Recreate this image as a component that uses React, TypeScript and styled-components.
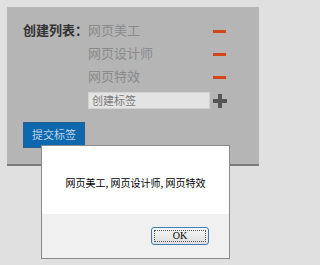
import React from "react";
import styled, { createGlobalStyle } from "styled-components";

const Global = createGlobalStyle`
  html, body { margin: 0; padding: 0; background: #e0e0e0; }
  body { font-family: "Noto Sans CJK SC", "Noto Sans", sans-serif; }
`;

const Page = styled.div`
  position: relative;
  width: 268px;
  height: 265px;
  padding: 7px 0 0 7px;
  box-sizing: border-box;
`;

const Panel = styled.div`
  width: 252px;
  box-sizing: border-box;
  background: #b5b5b5;
  border-bottom: 2px solid #7a7a7a;
  padding: 12px 0 16px 16px;
`;

const Grid = styled.div`
  display: grid;
  grid-template-columns: 65px 125px 13px;
  grid-auto-rows: 23px;
  align-items: center;
`;

const Label = styled.div`
  font-size: 13px;
  font-weight: bold;
  color: #333;
  line-height: 23px;
  margin-top: -2px;
`;

const Item = styled.div`
  font-size: 13px;
  color: #8a8a8a;
  line-height: 23px;
  margin-top: -2px;
`;

const Minus = styled.div`
  width: 13px;
  height: 3px;
  background: #d2461a;
  margin-top: 2px;
`;

const InputRow = styled.div`
  display: flex;
  align-items: center;
  margin: 4px 0 0 65px;
  height: 17px;
`;

const Input = styled.div`
  width: 122px;
  height: 17px;
  box-sizing: border-box;
  background: #e3e3e3;
  border: 1px solid #d2d2d2;
  font-size: 11px;
  line-height: 15px;
  color: #7a7a7a;
  padding-left: 3px;
`;

const Plus = styled.svg`
  margin-left: 3px;
  display: block;
`;

const Submit = styled.div`
  margin-top: 13px;
  width: 62px;
  height: 26px;
  background: #0d68ad;
  border: 1px solid #2a5e8c;
  box-sizing: border-box;
  color: #bcd3ea;
  font-size: 11px;
  line-height: 23px;
  text-align: center;
`;

const Dialog = styled.div`
  position: absolute;
  left: 41px;
  top: 145px;
  width: 189px;
  height: 114px;
  box-sizing: border-box;
  border: 1px solid #8a8a8a;
  background: #f0f0f0;
  display: flex;
  flex-direction: column;
`;

const Message = styled.div`
  height: 68px;
  background: #ffffff;
  display: flex;
  align-items: center;
  justify-content: center;
  font-size: 10px;
  color: #000;
  padding-top: 4px;
  box-sizing: border-box;
`;

const Footer = styled.div`
  flex: 1;
  display: flex;
  align-items: center;
  justify-content: flex-end;
  padding-right: 20px;
  padding-bottom: 1px;
`;

const OkButton = styled.div`
  width: 58px;
  height: 18px;
  box-sizing: border-box;
  border: 1px solid #3c7fb1;
  border-radius: 3px;
  background: linear-gradient(#f6f6f6, #dedede);
  padding: 2px;
`;

const OkInner = styled.div`
  height: 100%;
  box-sizing: border-box;
  border: 1px dotted #555;
  font-family: "Liberation Serif", "DejaVu Serif", serif;
  font-size: 10px;
  line-height: 10px;
  color: #000;
  text-align: center;
`;

const items = ["网页美工", "网页设计师", "网页特效"];

export default function App() {
  return (
    <>
      <Global />
      <Page>
        <Panel>
          <Grid>
            {items.map((t, i) => (
              <React.Fragment key={t}>
                <Label>{i === 0 ? "创建列表：" : ""}</Label>
                <Item>{t}</Item>
                <Minus />
              </React.Fragment>
            ))}
          </Grid>
          <InputRow>
            <Input>创建标签</Input>
            <Plus width="14" height="14" viewBox="0 0 14 14">
              <rect x="0" y="5" width="14" height="4" fill="#555" />
              <rect x="5" y="0" width="4" height="14" fill="#555" />
            </Plus>
          </InputRow>
          <Submit>提交标签</Submit>
        </Panel>
        <Dialog>
          <Message>网页美工, 网页设计师, 网页特效</Message>
          <Footer>
            <OkButton>
              <OkInner>OK</OkInner>
            </OkButton>
          </Footer>
        </Dialog>
      </Page>
    </>
  );
}
